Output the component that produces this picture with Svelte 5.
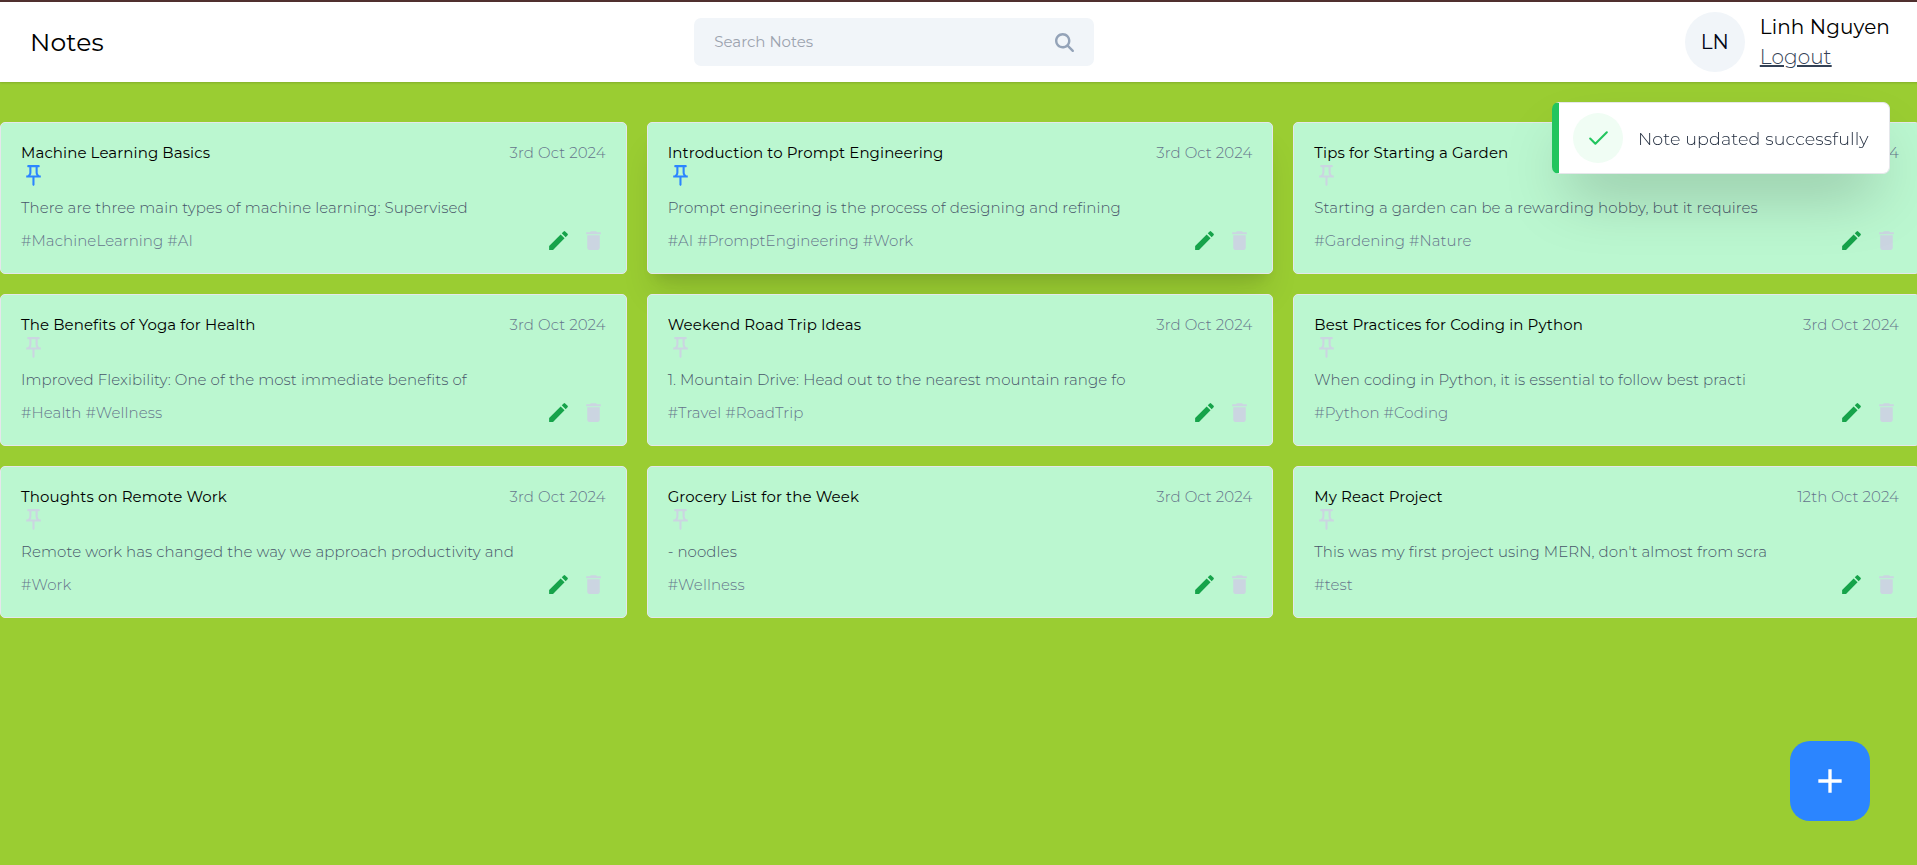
<script>
  const notes = [
    { title: 'Machine Learning Basics', date: '3rd Oct 2024', text: 'There are three main types of machine learning: Supervised', tags: '#MachineLearning #AI', pinned: true },
    { title: 'Introduction to Prompt Engineering', date: '3rd Oct 2024', text: 'Prompt engineering is the process of designing and refining', tags: '#AI #PromptEngineering #Work', pinned: true, raised: true },
    { title: 'Tips for Starting a Garden', date: '3rd Oct 2024', text: 'Starting a garden can be a rewarding hobby, but it requires', tags: '#Gardening #Nature' },
    { title: 'The Benefits of Yoga for Health', date: '3rd Oct 2024', text: 'Improved Flexibility: One of the most immediate benefits of', tags: '#Health #Wellness' },
    { title: 'Weekend Road Trip Ideas', date: '3rd Oct 2024', text: '1. Mountain Drive: Head out to the nearest mountain range fo', tags: '#Travel #RoadTrip' },
    { title: 'Best Practices for Coding in Python', date: '3rd Oct 2024', text: 'When coding in Python, it is essential to follow best practi', tags: '#Python #Coding' },
    { title: 'Thoughts on Remote Work', date: '3rd Oct 2024', text: 'Remote work has changed the way we approach productivity and', tags: '#Work' },
    { title: 'Grocery List for the Week', date: '3rd Oct 2024', text: '- noodles', tags: '#Wellness' },
    { title: 'My React Project', date: '12th Oct 2024', text: "This was my first project using MERN, don't almost from scra", tags: '#test' }
  ];
</script>

<div class="page">
  <header>
    <h1>Notes</h1>
    <div class="search">
      <span>Search Notes</span>
      <svg viewBox="0 0 512 512" fill="currentColor"><path d="M416 208c0 45.900-14.900 88.300-40 122.700L502.600 457.400c12.500 12.500 12.500 32.800 0 45.300s-32.800 12.500-45.300 0L330.700 376c-34.400 25.200-76.800 40-122.700 40C93.100 416 0 322.900 0 208S93.100 0 208 0S416 93.100 416 208zM208 352a144 144 0 1 0 0-288 144 144 0 1 0 0 288z" /></svg>
    </div>
    <div class="profile">
      <div class="avatar">LN</div>
      <div class="who">
        <p>Linh Nguyen</p>
        <button class="logout">Logout</button>
      </div>
    </div>
  </header>

  <main>
    {#each notes as note}
      <article class:raised={note.raised}>
        <div class="top">
          <h6>{note.title}</h6>
          <span class="date">{note.date}</span>
        </div>
        <svg class="pin" class:pinned={note.pinned} viewBox="0 0 24 24" fill="currentColor"><path d="M14 4v5c0 1.120.37 2.160 1 3H9c.65-.86 1-1.900 1-3V4h4m3-2H7c-.55 0-1 .45-1 1s.45 1 1 1h1v5c0 1.660-1.340 3-3 3v2h5.970v7l1 1 1-1v-7H19v-2c-1.660 0-3-1.340-3-3V4h1c.55 0 1-.45 1-1s-.45-1-1-1z" /></svg>
        <p class="text">{note.text}</p>
        <div class="bottom">
          <span class="tags">{note.tags}</span>
          <div class="actions">
            <svg class="edit" viewBox="0 0 24 24" fill="currentColor"><path d="M3 17.250V21h3.750L17.810 9.940l-3.750-3.750L3 17.250zM20.710 7.040a.996.996 0 0 0 0-1.410l-2.340-2.340a.996.996 0 0 0-1.410 0l-1.830 1.830 3.750 3.750 1.830-1.830z" /></svg>
            <svg class="del" viewBox="0 0 24 24" fill="currentColor"><path d="M6 19c0 1.100.9 2 2 2h8c1.100 0 2-.9 2-2V7H6v12zM19 4h-3.500l-1-1h-5l-1 1H5v2h14V4z" /></svg>
          </div>
        </div>
      </article>
    {/each}
  </main>

  <button class="add" aria-label="Add note">
    <svg viewBox="0 0 24 24" fill="currentColor"><path d="M19 13h-6v6h-2v-6H5v-2h6V5h2v6h6v2z" /></svg>
  </button>

  <div class="toast">
    <div class="badge">
      <svg viewBox="0 0 24 24" fill="none" stroke="currentColor" stroke-width="2" stroke-linecap="round" stroke-linejoin="round"><path d="M20 6 9 17l-5-5" /></svg>
    </div>
    <p>Note updated successfully</p>
  </div>
</div>

<style>
  :global(body) {
    background: #9acd32;
    overflow: hidden;
  }
  .page {
    box-sizing: border-box;
    width: 1920px;
    height: 865px;
    border-top: 2px solid #50302f;
    font-family: Montserrat, Inter, sans-serif;
    font-weight: 400;
    color: #000;
  }
  h1, h6, p {
    margin: 0;
    font-weight: 400;
  }
  svg {
    display: block;
    flex: none;
  }
  button {
    border: 0;
    padding: 0;
    background: none;
    font: inherit;
  }
  header {
    display: flex;
    align-items: center;
    justify-content: space-between;
    box-sizing: border-box;
    height: 80px;
    padding: 0 30px;
    background: #fff;
    box-shadow: 0 1.25px 2.5px rgba(0, 0, 0, 0.1), 0 1.25px 1.25px rgba(0, 0, 0, 0.06);
  }
  h1 {
    font-size: 25px;
    line-height: 35px;
    font-weight: 450;
    letter-spacing: 0.15px;
  }
  .search {
    display: flex;
    align-items: center;
    justify-content: space-between;
    box-sizing: border-box;
    width: 400px;
    height: 48px;
    padding: 0 20px;
    border-radius: 7px;
    background: #f1f5f9;
    color: #94a3b8;
    font-size: 15px;
  }
  .search span {
    position: relative;
    top: -0.5px;
    color: #9ca3af;
  }
  .search svg {
    width: 19px;
    height: 19px;
  }
  .profile {
    display: flex;
    align-items: center;
    gap: 15px;
    font-size: 20px;
    line-height: 30px;
  }
  .avatar {
    width: 60px;
    height: 60px;
    border-radius: 50%;
    background: #f1f5f9;
    color: #020617;
    font-weight: 450;
    line-height: 60px;
    text-align: center;
  }
  .who p {
    font-weight: 450;
    letter-spacing: 0.12px;
  }
  .logout {
    display: block;
    color: #334155;
    font-weight: 360;
    letter-spacing: 0.1px;
    text-decoration: underline;
    text-decoration-thickness: 2px;
  }
  main {
    display: grid;
    grid-template-columns: repeat(3, 1fr);
    gap: 20px;
    margin-top: 40px;
    font-size: 15px;
    line-height: 20px;
  }
  article {
    box-sizing: border-box;
    height: 152px;
    padding: 20px;
    border: 1px solid #e5e7eb;
    border-radius: 5px;
    background: #bbf7d0;
    white-space: nowrap;
  }
  .raised {
    box-shadow: 0 25px 31px -6px rgba(0, 0, 0, 0.1), 0 10px 12.5px -7.5px rgba(0, 0, 0, 0.1);
  }
  .top, .bottom {
    display: flex;
    align-items: center;
    justify-content: space-between;
  }
  h6 {
    font-size: 15px;
    font-weight: 450;
    letter-spacing: 0.1px;
  }
  .date, .tags, .text {
    font-weight: 360;
    letter-spacing: 0.09px;
  }
  .date, .tags {
    color: #64748b;
  }
  .text {
    margin: 10px 0;
    color: #475569;
  }
  .pin, .edit, .del {
    width: 25px;
    height: 25px;
  }
  .pin, .del {
    color: #cbd5e1;
  }
  .pin.pinned {
    color: #2b85ff;
  }
  .edit {
    color: #16a34a;
  }
  .actions {
    display: flex;
    gap: 10px;
  }
  .add {
    position: fixed;
    left: 1790px;
    top: 741px;
    display: grid;
    place-items: center;
    width: 80px;
    height: 80px;
    border-radius: 20px;
    background: #2b85ff;
    color: #fff;
  }
  .add svg {
    width: 40px;
    height: 40px;
  }
  .toast {
    position: fixed;
    left: 1552px;
    top: 102px;
    display: flex;
    align-items: center;
    gap: 15px;
    box-sizing: border-box;
    width: 338px;
    height: 72px;
    padding-left: 14px;
    border: 1px solid #e5e7eb;
    border-left: 7px solid #22c55e;
    border-radius: 7px;
    background: #fff;
    box-shadow: 0 31px 62px -15px rgba(0, 0, 0, 0.25);
    font-size: 17.5px;
    color: #1e293b;
    white-space: nowrap;
  }
  .toast p {
    font-weight: 360;
    letter-spacing: 0.12px;
  }
  .badge {
    display: grid;
    place-items: center;
    width: 50px;
    height: 50px;
    border-radius: 50%;
    background: #f0fdf4;
    color: #22c55e;
  }
  .badge svg {
    width: 25px;
    height: 25px;
  }
</style>
